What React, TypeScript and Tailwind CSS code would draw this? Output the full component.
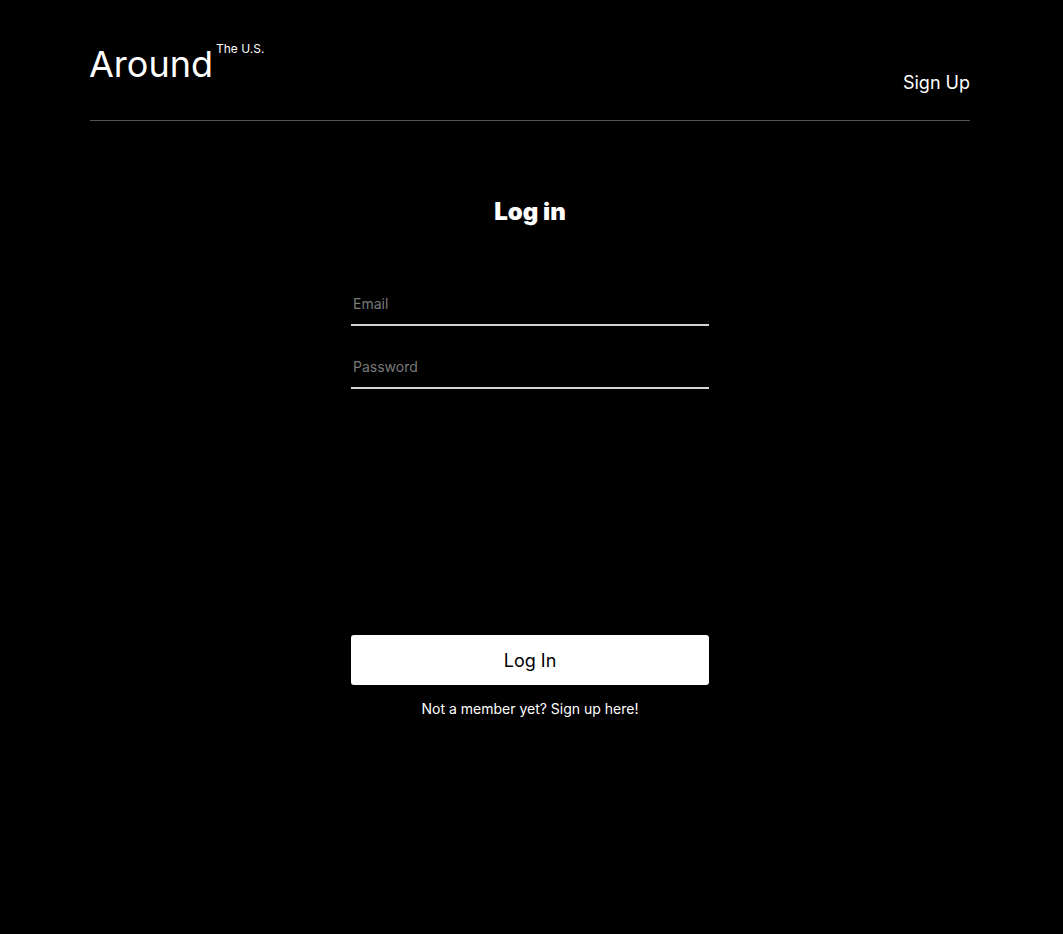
export default function App() {
  return (
    <div className="min-h-[934px] bg-black text-white" style={{ fontFamily: "Inter, 'Noto Sans', sans-serif" }}>
      <div className="ml-[90px] w-[880px]">
        <header className="flex items-end justify-between border-b border-[#545454] pt-[42px] pb-[34px]">
          <div className="flex items-start">
            <span className="ml-[-1px] text-[36px] leading-[44px] font-normal">Around</span>
            <span className="ml-[3px] mt-[-1px] text-[12px] leading-[16px]">The U.S.</span>
          </div>
          <a className="mb-[-8px] text-[18px] leading-[22px]">Sign Up</a>
        </header>
        <main className="flex flex-col items-center">
          <h1 className="mt-[76px] text-[24px] leading-[30px] font-black">Log in</h1>
          <form className="mt-[65px] flex w-[358px] flex-col">
            <input
              placeholder="Email"
              className="h-[34px] w-full border-b-2 border-[#d3d3d3] bg-transparent px-[2px] pb-[10px] text-[14px] text-white outline-none placeholder:text-[#7a7a7a]"
            />
            <input
              type="password"
              placeholder="Password"
              className="mt-[29px] h-[34px] w-full border-b-2 border-[#d3d3d3] bg-transparent px-[2px] pb-[10px] text-[14px] text-white outline-none placeholder:text-[#7a7a7a]"
            />
            <button
              type="button"
              className="mt-[246px] h-[50px] w-full rounded-[3px] bg-white text-[18px] text-black"
            >
              Log In
            </button>
            <p className="mt-[15px] text-center text-[14px] leading-[18px]">Not a member yet? Sign up here!</p>
          </form>
        </main>
      </div>
    </div>
  );
}
